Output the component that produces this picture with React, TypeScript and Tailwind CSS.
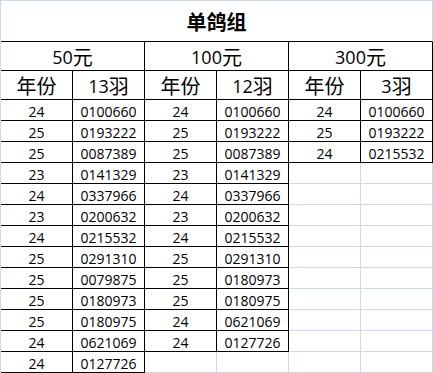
const BLK = "border-r border-b border-r-black border-b-black";
const GRY = "border-r border-b border-[#d0d7e5]";

const font = { fontFamily: '"Open Sans", "Noto Sans CJK SC", sans-serif' };

const fifty: [string, string][] = [
  ["24", "0100660"],
  ["25", "0193222"],
  ["25", "0087389"],
  ["23", "0141329"],
  ["24", "0337966"],
  ["23", "0200632"],
  ["24", "0215532"],
  ["25", "0291310"],
  ["25", "0079875"],
  ["25", "0180973"],
  ["25", "0180975"],
  ["24", "0621069"],
  ["24", "0127726"],
];

const hundred: [string, string][] = [
  ["24", "0100660"],
  ["25", "0193222"],
  ["25", "0087389"],
  ["23", "0141329"],
  ["24", "0337966"],
  ["23", "0200632"],
  ["24", "0215532"],
  ["25", "0291310"],
  ["25", "0180973"],
  ["25", "0180975"],
  ["24", "0621069"],
  ["24", "0127726"],
];

const threeHundred: [string, string][] = [
  ["24", "0100660"],
  ["25", "0193222"],
  ["24", "0215532"],
];

const Cell = ({ border, children }: { border: string; children?: React.ReactNode }) => (
  <div className={`w-[72px] h-[21px] flex items-center justify-center pt-[2px] text-[14px] text-black ${border}`}>
    {children}
  </div>
);

const Head = ({ wide, num, cjk }: { wide?: boolean; num: string; cjk: string }) => (
  <div
    className={`${wide ? "w-[144px]" : "w-[72px]"} h-[29px] flex items-center justify-center pt-[3px] text-[18px] text-black ${BLK}`}
  >
    <span>{num}</span>
    <span className="text-[20px]">{cjk}</span>
  </div>
);

export default function App() {
  return (
    <div className="w-[433px] h-[373px] bg-white border-l border-t border-[#d0d7e5]" style={font}>
      <div className="w-[432px] h-[41px] flex items-center justify-center pt-[3px] text-[20px] font-bold text-black border-r border-b border-r-[#d0d7e5] border-b-black">
        单鸽组
      </div>
      <div className="flex">
        <Head wide num="50" cjk="元" />
        <Head wide num="100" cjk="元" />
        <Head wide num="300" cjk="元" />
      </div>
      <div className="flex">
        <Head num="" cjk="年份" />
        <Head num="13" cjk="羽" />
        <Head num="" cjk="年份" />
        <Head num="12" cjk="羽" />
        <Head num="" cjk="年份" />
        <Head num="3" cjk="羽" />
      </div>
      {fifty.map((row, i) => {
        const h = hundred[i];
        const t = threeHundred[i];
        return (
          <div key={i} className="flex">
            <Cell border={BLK}>{row[0]}</Cell>
            <Cell border={BLK}>{row[1]}</Cell>
            <Cell border={h ? BLK : GRY}>{h?.[0]}</Cell>
            <Cell border={h ? BLK : GRY}>{h?.[1]}</Cell>
            <Cell border={t ? BLK : GRY}>{t?.[0]}</Cell>
            <Cell border={t ? BLK : GRY}>{t?.[1]}</Cell>
          </div>
        );
      })}
    </div>
  );
}
